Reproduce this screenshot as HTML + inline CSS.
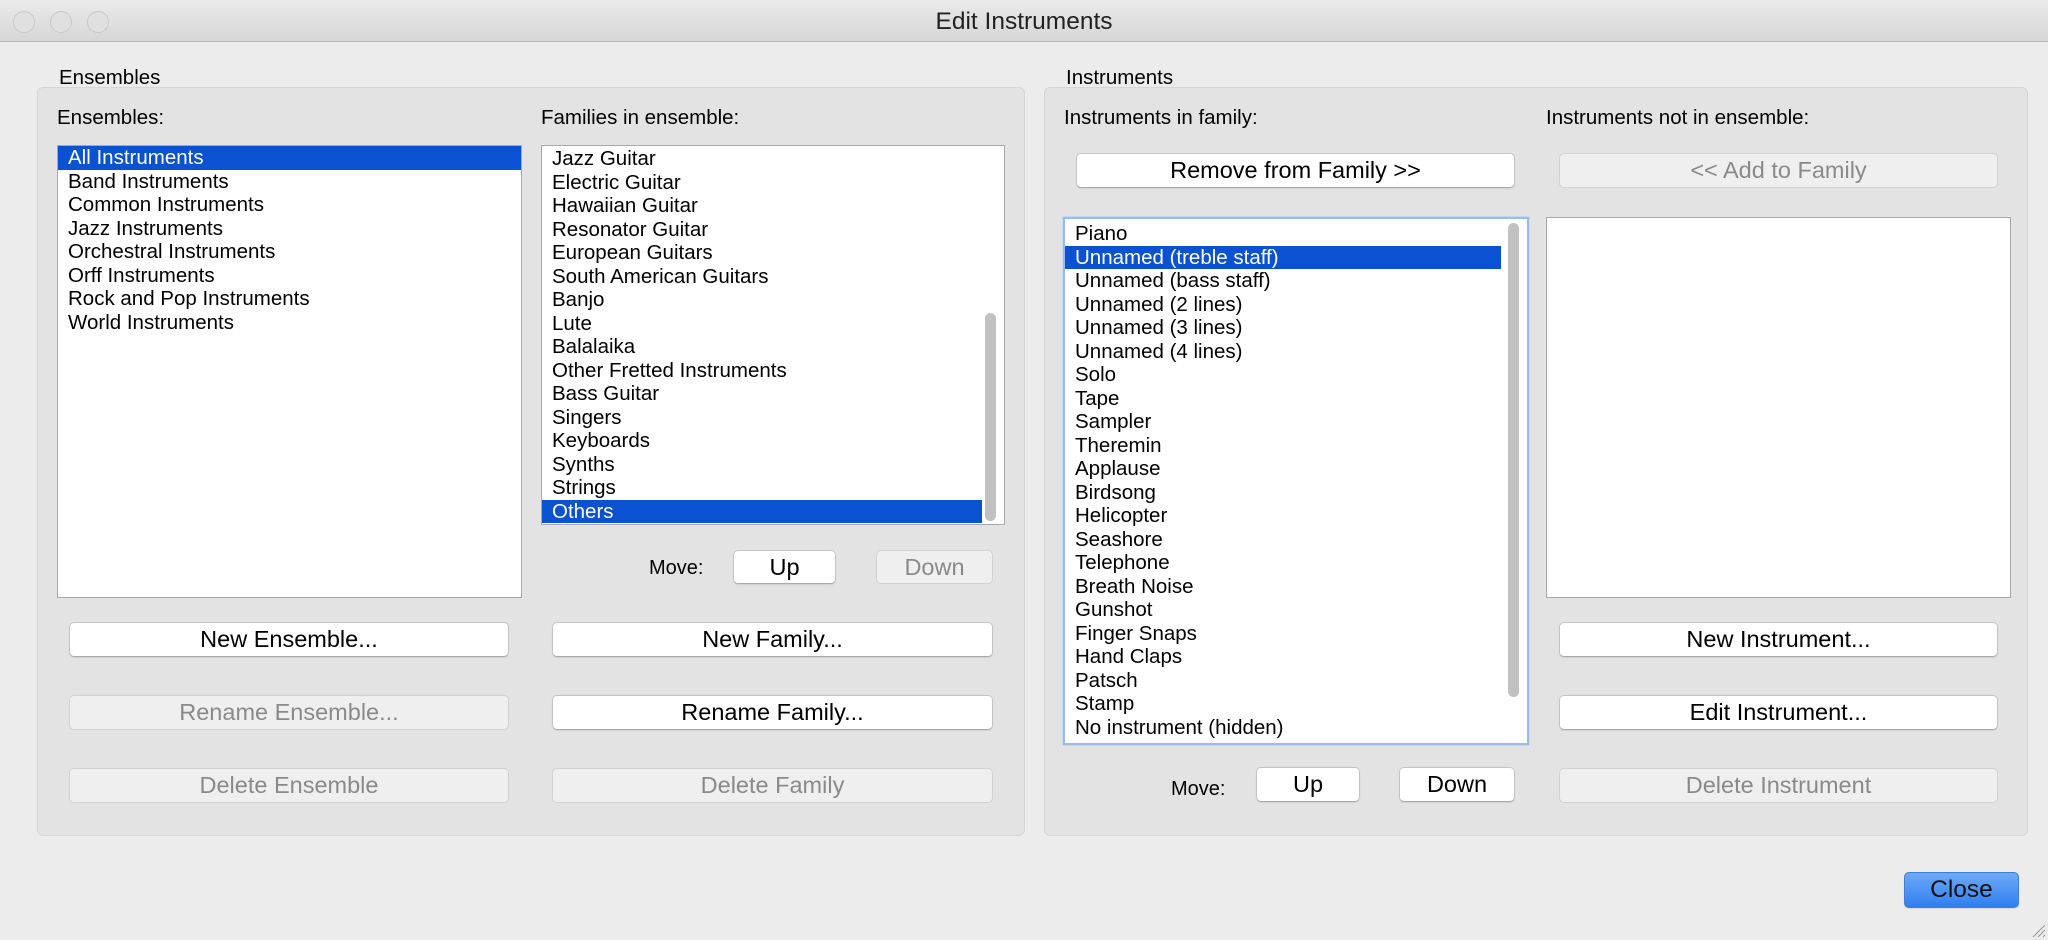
<!DOCTYPE html>
<html><head><meta charset="utf-8"><style>
*{margin:0;padding:0;box-sizing:border-box}
body{width:2048px;height:940px;background:#ececec;font-family:"Liberation Sans",sans-serif;font-size:20.5px;color:#000;position:relative;overflow:hidden}
.a{position:absolute}
.title{left:0;top:0;width:2048px;height:42px;background:linear-gradient(#ebebeb,#d6d6d6);border-bottom:1px solid #b8b8b8;text-align:center;line-height:44px;font-size:24.5px;color:#222}
.dot{top:11px;width:22px;height:22px;border-radius:50%;border:1px solid #c9c9c9;background:#e0e0e0}
.grp{background:#e3e3e3;border:1px solid #d6d6d6;border-radius:6px}
.lbl{line-height:22px}
.list{background:#fff;border:1px solid #a9a9a9}
.row{position:absolute;left:0;right:0;height:23.5px;line-height:23.5px;padding-left:10px;white-space:nowrap}
.sel{background:#0a52d2;color:#fff}
.btn{position:absolute;background:#fff;border:1px solid #c4c4c4;border-bottom-color:#aaa;border-radius:5px;text-align:center;box-shadow:0 1px 1px rgba(0,0,0,.08);font-size:23.5px;white-space:nowrap}
.dis{background:#efefef;color:#8a8a8a;border-color:#d2d2d2;box-shadow:none}
.sb{position:absolute;width:11px;border-radius:6px;background:#c1c1c1}
.mv{font-size:20px}
</style></head><body>
<div class="a title">Edit Instruments</div>
<div class="a dot" style="left:13px"></div><div class="a dot" style="left:50px"></div><div class="a dot" style="left:87px"></div>

<div class="a grp" style="left:37px;top:87px;width:988px;height:749px"></div>
<div class="a grp" style="left:1044px;top:87px;width:984px;height:749px"></div>
<div class="a lbl" style="left:59px;top:67px">Ensembles</div>
<div class="a lbl" style="left:1066px;top:67px">Instruments</div>

<div class="a lbl" style="left:57px;top:107px">Ensembles:</div>
<div class="a lbl" style="left:541px;top:107px">Families in ensemble:</div>
<div class="a lbl" style="left:1064px;top:107px">Instruments in family:</div>
<div class="a lbl" style="left:1546px;top:107px">Instruments not in ensemble:</div>

<div class="a list" style="left:57px;top:145px;width:465px;height:453px">
<div class="row sel" style="top:0">All Instruments</div>
<div class="row" style="top:23.5px">Band Instruments</div>
<div class="row" style="top:47px">Common Instruments</div>
<div class="row" style="top:70.5px">Jazz Instruments</div>
<div class="row" style="top:94px">Orchestral Instruments</div>
<div class="row" style="top:117.5px">Orff Instruments</div>
<div class="row" style="top:141px">Rock and Pop Instruments</div>
<div class="row" style="top:164.5px">World Instruments</div>
</div>

<div class="a list" style="left:541px;top:145px;width:464px;height:380px;overflow:hidden">
<div class="row" style="top:1px">Jazz Guitar</div>
<div class="row" style="top:24.5px">Electric Guitar</div>
<div class="row" style="top:48px">Hawaiian Guitar</div>
<div class="row" style="top:71.5px">Resonator Guitar</div>
<div class="row" style="top:95px">European Guitars</div>
<div class="row" style="top:118.5px">South American Guitars</div>
<div class="row" style="top:142px">Banjo</div>
<div class="row" style="top:165.5px">Lute</div>
<div class="row" style="top:189px">Balalaika</div>
<div class="row" style="top:212.5px">Other Fretted Instruments</div>
<div class="row" style="top:236px">Bass Guitar</div>
<div class="row" style="top:259.5px">Singers</div>
<div class="row" style="top:283px">Keyboards</div>
<div class="row" style="top:306.5px">Synths</div>
<div class="row" style="top:330px">Strings</div>
<div class="row sel" style="top:353.5px;right:22px">Others</div>
<div class="sb" style="left:443px;top:167px;height:208px"></div>
</div>

<div class="a mv" style="left:649px;top:557px">Move:</div>
<div class="btn" style="left:733px;top:550px;width:103px;height:34px;line-height:32px">Up</div>
<div class="btn dis" style="left:876px;top:550px;width:117px;height:34px;line-height:32px">Down</div>

<div class="btn" style="left:69px;top:622px;width:440px;height:35px;line-height:33px">New Ensemble...</div>
<div class="btn dis" style="left:69px;top:695px;width:440px;height:35px;line-height:33px">Rename Ensemble...</div>
<div class="btn dis" style="left:69px;top:768px;width:440px;height:35px;line-height:33px">Delete Ensemble</div>
<div class="btn" style="left:552px;top:622px;width:441px;height:35px;line-height:33px">New Family...</div>
<div class="btn" style="left:552px;top:695px;width:441px;height:35px;line-height:33px">Rename Family...</div>
<div class="btn dis" style="left:552px;top:768px;width:441px;height:35px;line-height:33px">Delete Family</div>

<div class="btn" style="left:1076px;top:153px;width:439px;height:35px;line-height:33px">Remove from Family &gt;&gt;</div>
<div class="btn dis" style="left:1559px;top:153px;width:439px;height:35px;line-height:33px">&lt;&lt; Add to Family</div>

<div class="a list" style="left:1063px;top:217px;width:466px;height:528px;border:2px solid #9bbbea;box-shadow:0 0 0 1px #c3d6f3;overflow:hidden">
<div class="row" style="top:3px">Piano</div>
<div class="row sel" style="top:26.5px;right:26px">Unnamed (treble staff)</div>
<div class="row" style="top:50px">Unnamed (bass staff)</div>
<div class="row" style="top:73.5px">Unnamed (2 lines)</div>
<div class="row" style="top:97px">Unnamed (3 lines)</div>
<div class="row" style="top:120.5px">Unnamed (4 lines)</div>
<div class="row" style="top:144px">Solo</div>
<div class="row" style="top:167.5px">Tape</div>
<div class="row" style="top:191px">Sampler</div>
<div class="row" style="top:214.5px">Theremin</div>
<div class="row" style="top:238px">Applause</div>
<div class="row" style="top:261.5px">Birdsong</div>
<div class="row" style="top:285px">Helicopter</div>
<div class="row" style="top:308.5px">Seashore</div>
<div class="row" style="top:332px">Telephone</div>
<div class="row" style="top:355.5px">Breath Noise</div>
<div class="row" style="top:379px">Gunshot</div>
<div class="row" style="top:402.5px">Finger Snaps</div>
<div class="row" style="top:426px">Hand Claps</div>
<div class="row" style="top:449.5px">Patsch</div>
<div class="row" style="top:473px">Stamp</div>
<div class="row" style="top:496.5px">No instrument (hidden)</div>
<div class="sb" style="left:443px;top:4px;height:474px"></div>
</div>

<div class="a list" style="left:1546px;top:217px;width:465px;height:381px"></div>

<div class="a mv" style="left:1171px;top:778px">Move:</div>
<div class="btn" style="left:1256px;top:767px;width:104px;height:35px;line-height:33px">Up</div>
<div class="btn" style="left:1399px;top:767px;width:116px;height:35px;line-height:33px">Down</div>

<div class="btn" style="left:1559px;top:622px;width:439px;height:35px;line-height:33px">New Instrument...</div>
<div class="btn" style="left:1559px;top:695px;width:439px;height:35px;line-height:33px">Edit Instrument...</div>
<div class="btn dis" style="left:1559px;top:768px;width:439px;height:35px;line-height:33px">Delete Instrument</div>

<div class="btn" style="left:1904px;top:872px;width:115px;height:36px;line-height:34px;background:linear-gradient(#6eaaf7,#2f7ef0);border-color:#3f7dd6;color:#111;font-size:24.5px">Close</div>
<svg class="a" style="left:2030px;top:922px" width="16" height="16"><path d="M3 15L15 3M8 15L15 8M13 15L15 13" stroke="#999" stroke-width="1"/></svg>
</body></html>
